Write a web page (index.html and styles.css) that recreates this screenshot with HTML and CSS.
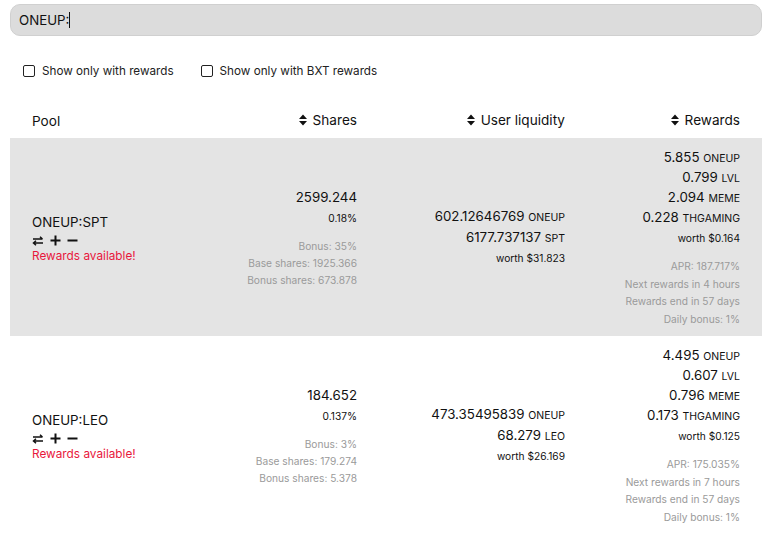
FILE: index.html
```html
<!DOCTYPE html>
<html>
<head>
<meta charset="utf-8">
<link rel="stylesheet" href="styles.css">
</head>
<body>
<div class="search"><span class="search-text">ONEUP:</span><span class="caret"></span></div>
<div class="filters">
  <label class="check"><span class="box"></span>Show only with rewards</label>
  <label class="check"><span class="box"></span>Show only with BXT rewards</label>
</div>
<div class="table">
  <div class="row head">
    <div class="cell pool">Pool</div>
    <div class="cell num"><span class="sort"><svg width="8" height="12" viewBox="0 0 8 12"><path d="M0 5 L4 0.5 L8 5 Z M0 7 L4 11.5 L8 7 Z" fill="#111"/></svg></span>Shares</div>
    <div class="cell num"><span class="sort"><svg width="8" height="12" viewBox="0 0 8 12"><path d="M0 5 L4 0.5 L8 5 Z M0 7 L4 11.5 L8 7 Z" fill="#111"/></svg></span>User liquidity</div>
    <div class="cell num"><span class="sort"><svg width="8" height="12" viewBox="0 0 8 12"><path d="M0 5 L4 0.5 L8 5 Z M0 7 L4 11.5 L8 7 Z" fill="#111"/></svg></span>Rewards</div>
  </div>

  <div class="row body shaded">
    <div class="cell pool">
      <div class="pname">ONEUP:SPT</div>
      <div class="actions">
        <svg width="12" height="10" viewBox="0 0 12 10"><path d="M1 3 H10.5 M8 0.8 L10.5 3 M11 7 H1.5 M4 4.8 L1.5 7 L4 9.2" stroke="#111" stroke-width="1.5" fill="none"/></svg>
        <svg width="11" height="11" viewBox="0 0 11 11"><path d="M5.5 0.5 V10.5 M0.5 5.5 H10.5" stroke="#111" stroke-width="2" fill="none"/></svg>
        <svg width="11" height="11" viewBox="0 0 11 11"><path d="M0.5 5.5 H10.5" stroke="#111" stroke-width="2" fill="none"/></svg>
      </div>
      <div class="avail">Rewards available!</div>
    </div>
    <div class="cell num">
      <div class="main">2599.244</div>
      <div class="small">0.18%</div>
      <div class="gray">
        <div>Bonus: 35%</div>
        <div>Base shares: 1925.366</div>
        <div>Bonus shares: 673.878</div>
      </div>
    </div>
    <div class="cell num liq">
      <div class="main">602.12646769 <span class="sym">ONEUP</span></div>
      <div class="main">6177.737137 <span class="sym">SPT</span></div>
      <div class="small">worth $31.823</div>
    </div>
    <div class="cell num rew">
      <div class="main">5.855 <span class="sym">ONEUP</span></div>
      <div class="main">0.799 <span class="sym">LVL</span></div>
      <div class="main">2.094 <span class="sym">MEME</span></div>
      <div class="main">0.228 <span class="sym">THGAMING</span></div>
      <div class="small">worth $0.164</div>
      <div class="gray">
        <div>APR: 187.717%</div>
        <div>Next rewards in 4 hours</div>
        <div>Rewards end in 57 days</div>
        <div>Daily bonus: 1%</div>
      </div>
    </div>
  </div>

  <div class="row body">
    <div class="cell pool">
      <div class="pname">ONEUP:LEO</div>
      <div class="actions">
        <svg width="12" height="10" viewBox="0 0 12 10"><path d="M1 3 H10.5 M8 0.8 L10.5 3 M11 7 H1.5 M4 4.8 L1.5 7 L4 9.2" stroke="#111" stroke-width="1.5" fill="none"/></svg>
        <svg width="11" height="11" viewBox="0 0 11 11"><path d="M5.5 0.5 V10.5 M0.5 5.5 H10.5" stroke="#111" stroke-width="2" fill="none"/></svg>
        <svg width="11" height="11" viewBox="0 0 11 11"><path d="M0.5 5.5 H10.5" stroke="#111" stroke-width="2" fill="none"/></svg>
      </div>
      <div class="avail">Rewards available!</div>
    </div>
    <div class="cell num">
      <div class="main">184.652</div>
      <div class="small">0.137%</div>
      <div class="gray">
        <div>Bonus: 3%</div>
        <div>Base shares: 179.274</div>
        <div>Bonus shares: 5.378</div>
      </div>
    </div>
    <div class="cell num liq">
      <div class="main">473.35495839 <span class="sym">ONEUP</span></div>
      <div class="main">68.279 <span class="sym">LEO</span></div>
      <div class="small">worth $26.169</div>
    </div>
    <div class="cell num rew">
      <div class="main">4.495 <span class="sym">ONEUP</span></div>
      <div class="main">0.607 <span class="sym">LVL</span></div>
      <div class="main">0.796 <span class="sym">MEME</span></div>
      <div class="main">0.173 <span class="sym">THGAMING</span></div>
      <div class="small">worth $0.125</div>
      <div class="gray">
        <div>APR: 175.035%</div>
        <div>Next rewards in 7 hours</div>
        <div>Rewards end in 57 days</div>
        <div>Daily bonus: 1%</div>
      </div>
    </div>
  </div>
</div>
</body>
</html>
```

FILE: styles.css
```css
* { box-sizing: border-box; }
body {
  margin: 4px 6px 0 10px;
  font-family: Inter, "Liberation Sans", sans-serif;
  color: #111;
  background: #fff;
}
.search {
  height: 32px;
  background: #dcdcdc;
  border: 1px solid #d0d0d0;
  border-radius: 10px;
  display: flex;
  align-items: center;
  padding-left: 8px;
  font-size: 13.3px;
}
.caret {
  display: inline-block;
  width: 1px;
  height: 16px;
  background: #111;
}
.filters {
  display: flex;
  gap: 27px;
  margin-top: 23px;
  padding-left: 13px;
  height: 24px;
  align-items: center;
  font-size: 11.7px;
  color: #222;
}
.check {
  display: flex;
  align-items: center;
  gap: 7px;
}
.box {
  width: 12px;
  height: 12px;
  border: 1.5px solid #222;
  border-radius: 2px;
  background: #fff;
}
.table {
  margin-top: 11px;
}
.row {
  display: grid;
  grid-template-columns: 180px 189px 208px 175px;
}
.head {
  height: 44px;
  align-items: center;
  font-size: 13.6px;
  padding-top: 9px;
}
.body {
  height: 198px;
  align-items: center;
  padding: 9px 0 8px;
}
.shaded { background: #e4e4e4; }
.cell { padding: 0 22px; }
.num { text-align: right; }
.sort { margin-right: 6px; vertical-align: -1px; }
.sort svg { display: inline-block; }
.main { font-size: 13.3px; line-height: 20px; }
.liq .main { line-height: 21px; }
.small { font-size: 10.2px; line-height: 22px; }
.liq .small { line-height: 21px; }
.sym { font-size: 10.5px; line-height: 1; }
.gray {
  font-size: 10.2px;
  line-height: 17px;
  color: #9a9a9a;
  margin-top: 9px;
}
.rew .gray { margin-top: 9px; line-height: 17.5px; }
.pname { font-size: 13.3px; line-height: 20px; }
.actions {
  display: flex;
  align-items: center;
  gap: 6px;
  height: 17px;
}
.avail { font-size: 11.8px; line-height: 14px; color: #e8173c; }
```
